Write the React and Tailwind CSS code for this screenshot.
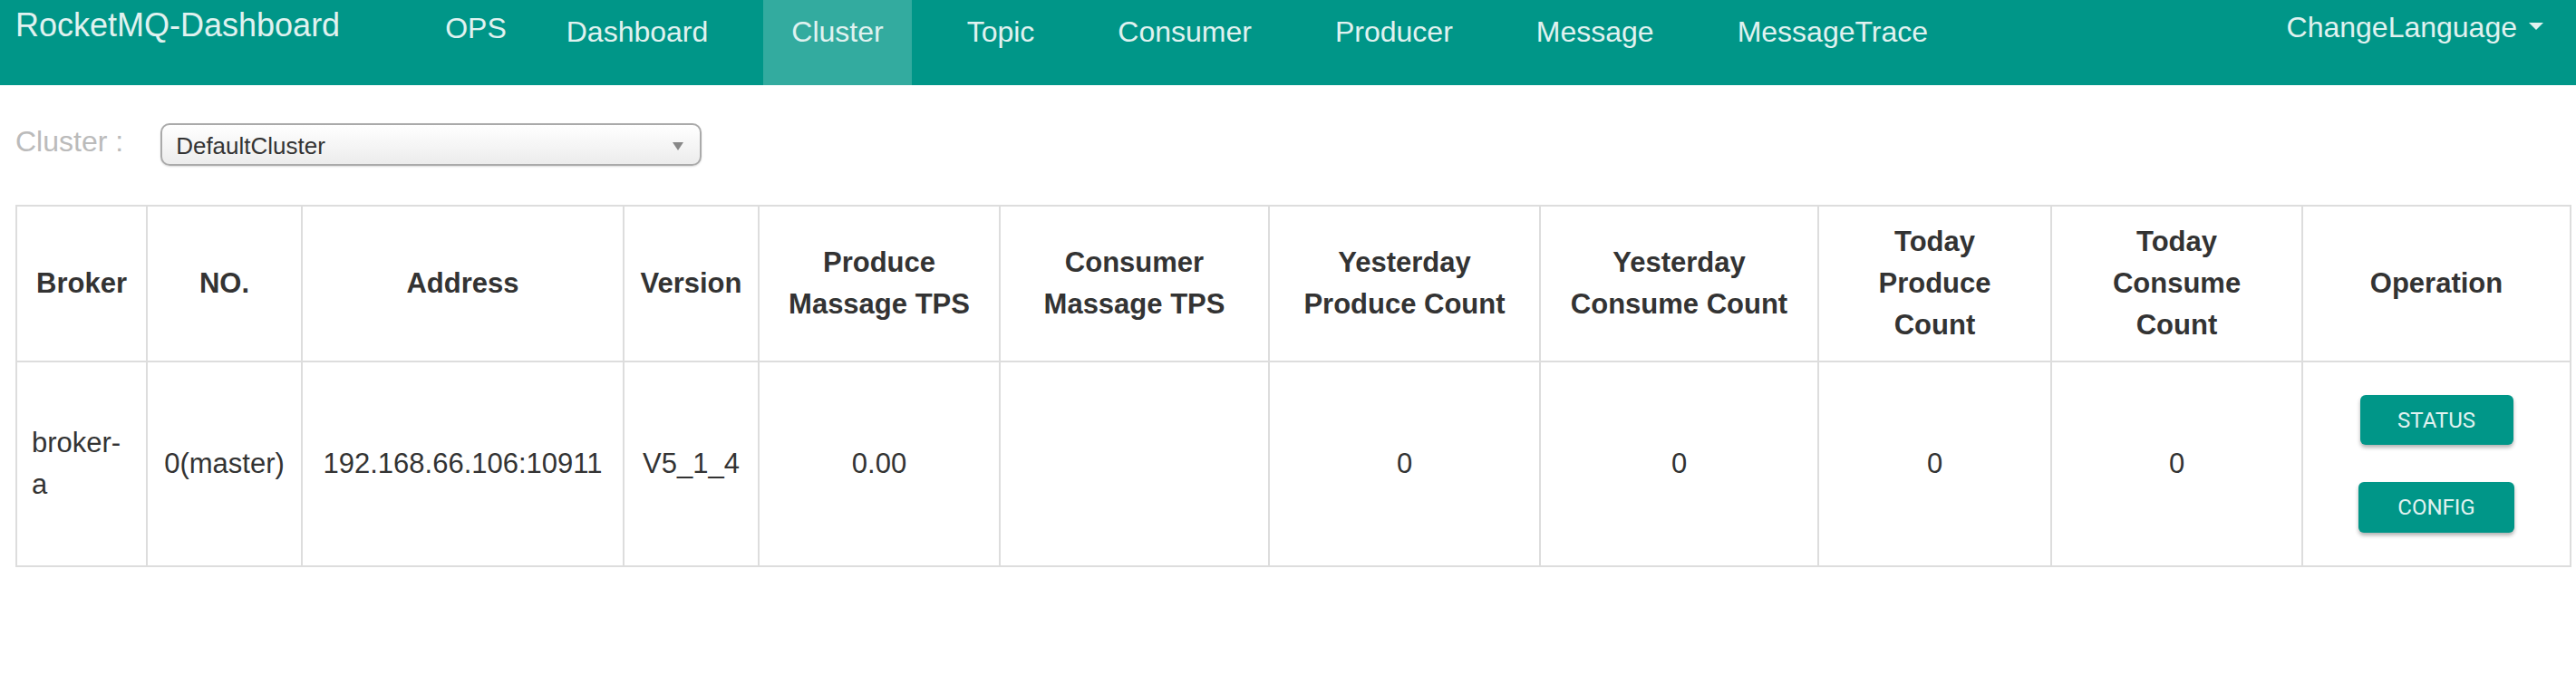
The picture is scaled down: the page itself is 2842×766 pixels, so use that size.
import React from 'react'

const NAV = ['Dashboard', 'Cluster', 'Topic', 'Consumer', 'Producer', 'Message', 'MessageTrace']

const COLS = [
  { w: 'w-[144px]', head: ['Broker'] },
  { w: 'w-[171px]', head: ['NO.'] },
  { w: 'w-[355px]', head: ['Address'] },
  { w: 'w-[149px]', head: ['Version'] },
  { w: 'w-[266px]', head: ['Produce', 'Massage TPS'] },
  { w: 'w-[297px]', head: ['Consumer', 'Massage TPS'] },
  { w: 'w-[299px]', head: ['Yesterday', 'Produce Count'] },
  { w: 'w-[307px]', head: ['Yesterday', 'Consume Count'] },
  { w: 'w-[257px]', head: ['Today', 'Produce', 'Count'] },
  { w: 'w-[277px]', head: ['Today', 'Consume', 'Count'] },
  { w: 'w-[296px]', head: ['Operation'] },
]

const ROW = ['0(master)', '192.168.66.106:10911', 'V5_1_4', '0.00', '', '0', '0', '0', '0']

const Navbar = () => {
  return (
    <div className="flex h-[94px] bg-[#009688] text-[#e0f2f0]">
      <div className="pl-[17px] pt-[10px] text-[36px] leading-none whitespace-nowrap">RocketMQ-Dashboard</div>
      <div className="ml-[116px] pt-[15px] text-[32px] leading-none">OPS</div>

      {/* menu */}
      <div className="ml-[35px] flex gap-[30px]">
        {NAV.map((item) => (
          <div
            key={item}
            className={
              item === 'Cluster'
                ? 'h-full px-[31px] pt-[19px] text-[32px] leading-none bg-white/20'
                : 'h-full px-[31px] pt-[19px] text-[32px] leading-none'
            }
          >
            {item}
          </div>
        ))}
      </div>

      <div className="ml-auto mr-[36px] flex items-start pt-[14px] text-[32px] leading-none">
        <span>ChangeLanguage</span>
        <span className="ml-[13px] mt-[11px] h-0 w-0 border-l-[8px] border-r-[8px] border-t-[8px] border-l-transparent border-r-transparent border-t-[#e0f2f0]"></span>
      </div>
    </div>
  )
}

const ClusterSelect = () => {
  return (
    <div className="mt-[42px] flex items-start pl-[17px]">
      <div className="mt-[4px] text-[32px] leading-none text-[#bbbbbb] whitespace-nowrap">Cluster :</div>
      <div className="ml-[41px] flex h-[47px] w-[597px] items-start justify-between rounded-[10px] border-2 border-[#aaaaaa] bg-gradient-to-b from-white to-[#ececec] pl-[15px] pr-[18px] pt-[10px] shadow-[0_1px_2px_rgba(0,0,0,0.15)]">
        <span className="text-[26px] leading-none text-[#333333]">DefaultCluster</span>
        <span className="mt-[9px] h-0 w-0 border-l-[6px] border-r-[6px] border-t-[9px] border-l-transparent border-r-transparent border-t-[#888888]"></span>
      </div>
    </div>
  )
}

const OpButton = ({ label, size }) => (
  <button
    className={`${size} rounded-[6px] bg-[#009688] font-['Roboto',sans-serif] text-[24px] text-[#e0f2f0] shadow-[0_3px_4px_rgba(0,0,0,0.3)]`}
  >
    {label}
  </button>
)

const App = () => {
  return (
    <div className="min-h-[766px] bg-white font-['Liberation_Sans',Arial,sans-serif] text-[#333333]">
      <Navbar />
      <ClusterSelect />

      <table className="ml-[17px] mt-[43px] w-[2818px] table-fixed border-collapse border-2 border-[#dddddd]">
        <colgroup>
          {COLS.map((c, i) => (
            <col key={i} className={c.w} />
          ))}
        </colgroup>
        <thead>
          <tr>
            {COLS.map((c, i) => (
              <th
                key={i}
                className="border-2 border-[#dddddd] px-[16px] py-[16px] text-center align-middle text-[31px] font-bold leading-[46px] whitespace-nowrap"
              >
                {c.head.map((line, j) => (
                  <div key={j}>{line}</div>
                ))}
              </th>
            ))}
          </tr>
        </thead>
        <tbody>
          <tr>
            <td className="border-2 border-[#dddddd] px-[16px] text-left align-middle text-[31px] leading-[46px]">
              <div>broker-</div>
              <div>a</div>
            </td>
            {ROW.map((v, i) => (
              <td key={i} className="border-2 border-[#dddddd] px-[8px] text-center align-middle text-[31px] leading-[46px] whitespace-nowrap">
                {v}
              </td>
            ))}
            <td className="border-2 border-[#dddddd] py-[36px] align-middle">
              <div className="flex flex-col items-center gap-[41px]">
                <OpButton label="STATUS" size="w-[169px] h-[55px]" />
                <OpButton label="CONFIG" size="w-[172px] h-[56px]" />
              </div>
            </td>
          </tr>
        </tbody>
      </table>
    </div>
  )
}

export default App
